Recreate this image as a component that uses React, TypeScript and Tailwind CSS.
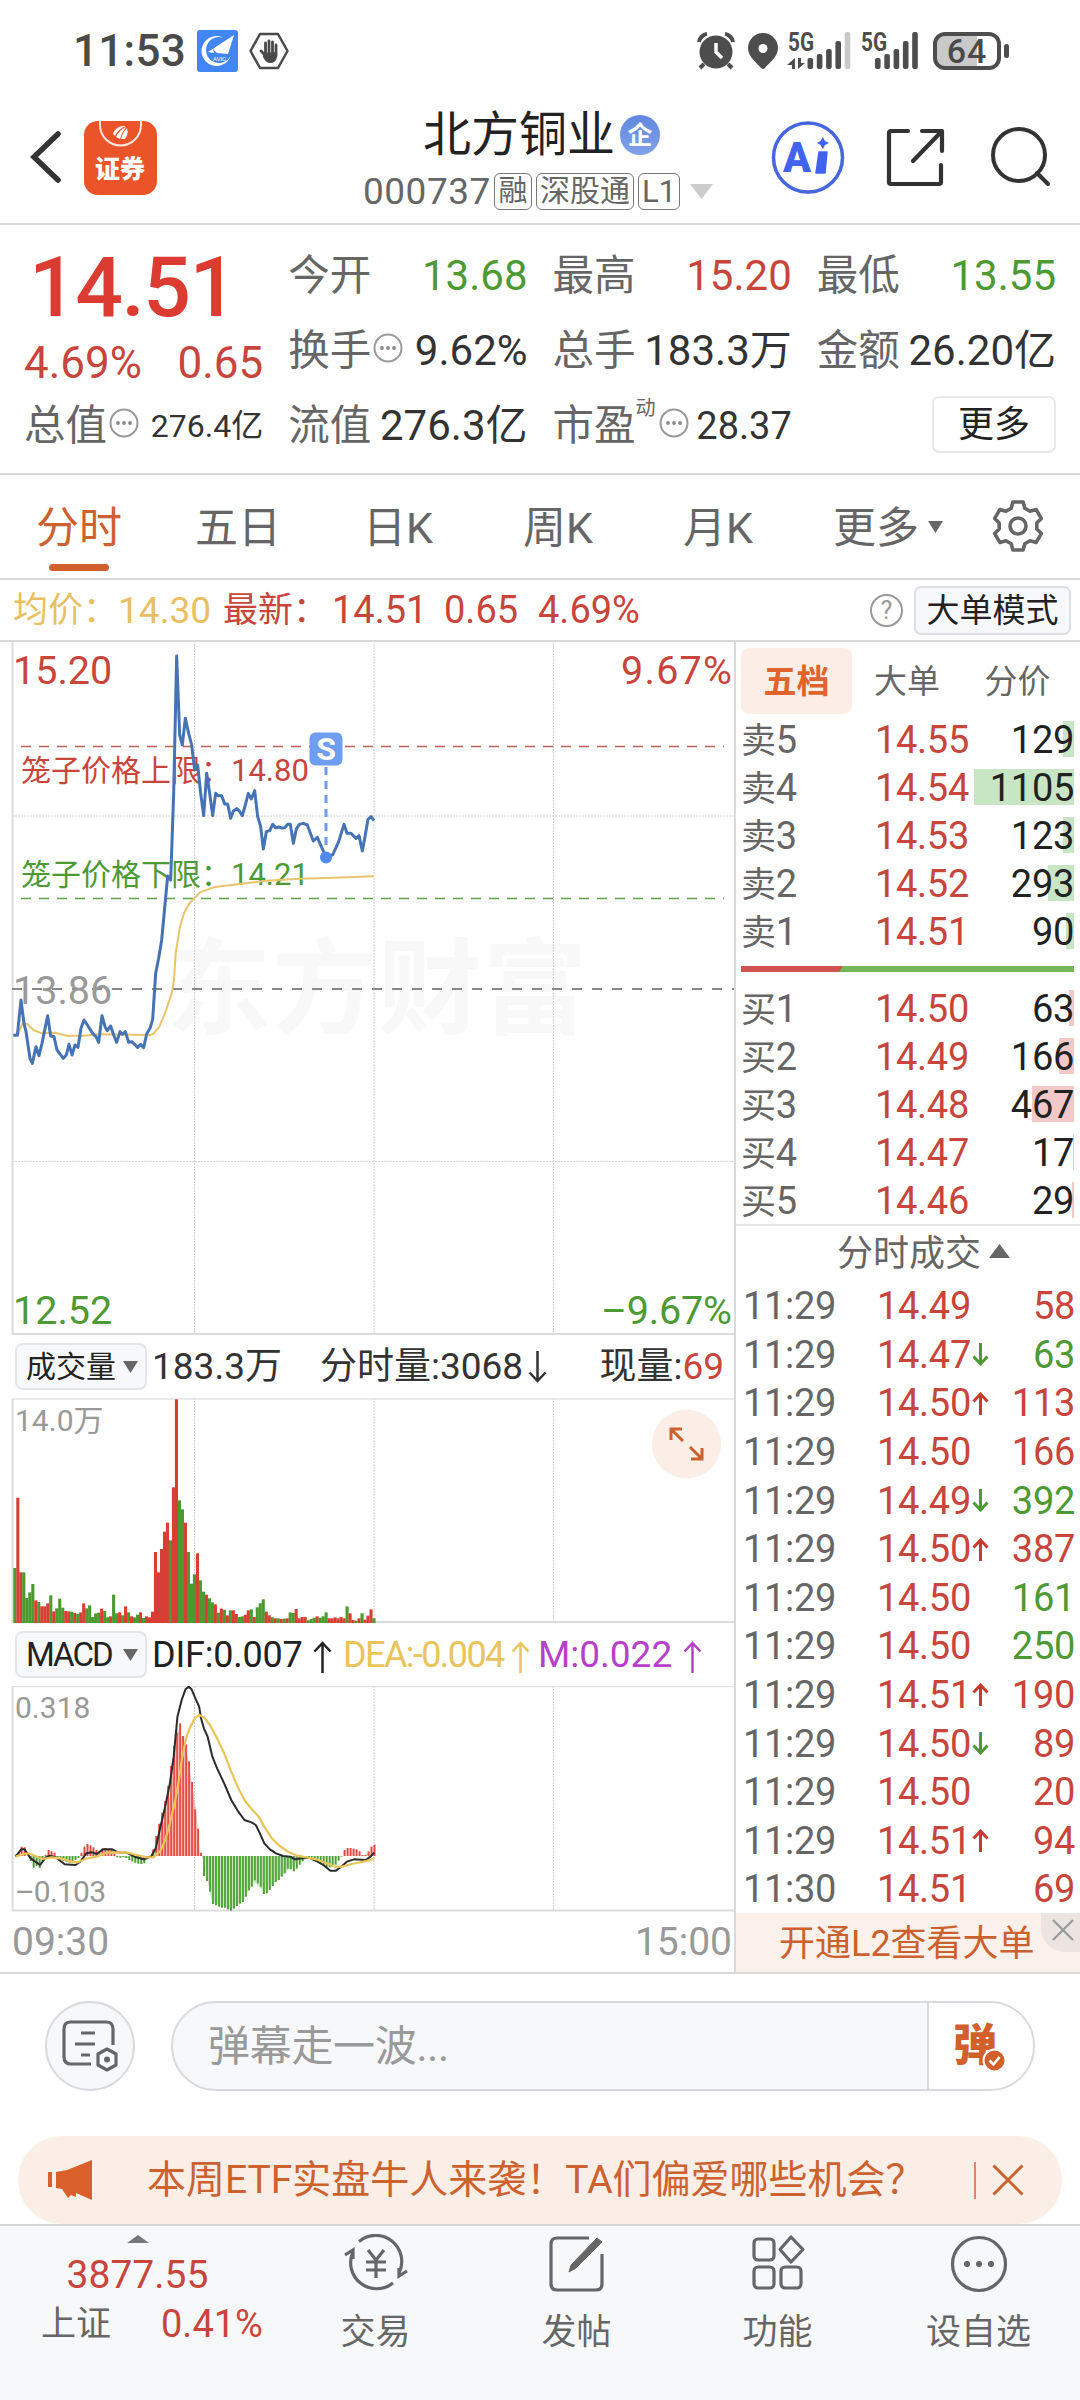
import type { ReactNode } from 'react';
import clsx from 'clsx';

const RED = '#c8453c';
const GREEN = '#4d9a35';

interface Level {
  label: string;
  price: string;
  volume: number;
  width: number;
}

interface Tick {
  time: string;
  price: string;
  volume: number;
  dir?: 'up' | 'down';
  sell?: boolean;
}

const asks: Level[] = [
  { label: '卖5', price: '14.55', volume: 129, width: 11 },
  { label: '卖4', price: '14.54', volume: 1105, width: 100 },
  { label: '卖3', price: '14.53', volume: 123, width: 11 },
  { label: '卖2', price: '14.52', volume: 293, width: 26 },
  { label: '卖1', price: '14.51', volume: 90, width: 8 },
];

const bids: Level[] = [
  { label: '买1', price: '14.50', volume: 63, width: 5 },
  { label: '买2', price: '14.49', volume: 166, width: 15 },
  { label: '买3', price: '14.48', volume: 467, width: 42 },
  { label: '买4', price: '14.47', volume: 17, width: 1 },
  { label: '买5', price: '14.46', volume: 29, width: 2 },
];

const ticks: Tick[] = [
  { time: '11:29', price: '14.49', volume: 58 },
  { time: '11:29', price: '14.47', volume: 63, dir: 'down', sell: true },
  { time: '11:29', price: '14.50', volume: 113, dir: 'up' },
  { time: '11:29', price: '14.50', volume: 166 },
  { time: '11:29', price: '14.49', volume: 392, dir: 'down', sell: true },
  { time: '11:29', price: '14.50', volume: 387, dir: 'up' },
  { time: '11:29', price: '14.50', volume: 161, sell: true },
  { time: '11:29', price: '14.50', volume: 250, sell: true },
  { time: '11:29', price: '14.51', volume: 190, dir: 'up' },
  { time: '11:29', price: '14.50', volume: 89, dir: 'down' },
  { time: '11:29', price: '14.50', volume: 20 },
  { time: '11:29', price: '14.51', volume: 94, dir: 'up' },
  { time: '11:30', price: '14.51', volume: 69 },
];

const pricePoints =
  '40,1216 52,1216 63,1110 72,1180 78,1205 90,1285 97,1300 108,1250 117,1277 126,1240 143,1157 152,1218 162,1220 171,1260 190,1285 199,1275 207,1243 216,1275 225,1245 234,1252 243,1195 252,1170 264,1188 278,1210 288,1220 296,1237 306,1157 315,1190 322,1202 332,1188 341,1215 350,1237 360,1205 367,1213 376,1205 386,1237 395,1235 404,1243 413,1252 422,1243 431,1253 440,1212 450,1195 458,1168 467,1030 476,985 485,930 503,738 512,750 521,490 530,78 539,315 547,345 556,265 566,310 575,345 584,420 593,405 602,490 611,557 620,430 629,490 638,557 647,490 655,497 665,497 674,522 683,522 692,565 700,543 710,536 718,543 727,557 736,525 745,490 754,507 764,482 773,560 782,590 790,657 799,605 809,602 818,583 827,593 836,591 845,594 854,593 863,583 871,583 880,640 889,597 898,583 910,580 922,585 930,607 940,633 952,622 964,650 978,680 998,675 1016,635 1032,583 1041,610 1053,610 1068,625 1077,617 1087,663 1095,620 1104,568 1113,560 1122,572';

const averagePoints =
  '40,1216 55,1212 67,1180 82,1182 100,1200 125,1210 165,1208 200,1217 250,1217 300,1213 450,1215 460,1212 478,1190 495,1150 515,1090 522,1050 527,970 540,890 552,850 568,820 585,803 600,787 640,772 700,764 800,752 900,746 1000,743 1122,739';

// r = rising minute, g = falling minute
const volumeBars =
  'g165 r376 r152 g152 g75 g92 g117 r68 g63 r50 r50 r59 g83 r35 g44 g73 g46 r36 r35 g34 r30 g27 r32 r59 g44 g53 g18 g29 g31 r43 g36 g17 r20 g85 g29 r32 g23 r50 g32 r20 g17 g25 r32 g15 r20 r17 r34 r213 r152 r222 r274 r301 g248 r407 r671 g368 g341 r301 g213 g118 g146 r209 g128 g94 r85 g74 g62 r56 g31 r43 g40 r23 g38 r38 r27 g18 g20 r25 r38 g41 r18 g47 g59 g71 r34 r23 g17 r14 g14 r12 g13 r14 g32 g30 r42 r14 r18 r18 g8 g12 g16 r20 g16 g20 g32 r14 r14 r17 r14 r18 r14 g50 r29 r9 g7 r14 g29 r10 r22 r41 g14'.split(' ');

const macdBars = [
  4, 8, 28, 26, 0, -15, -35, -30, -36, -15, 3, 18, 14, 10, -4, -12, -16, -18, -20, -16, -12, -6, 10, 28, 36, 32, 26, 18, 8, 22,
  24, 20, 18, 8, -4, -5, -4, -6, -12, -16, -20, -23, -24, -22, -10, -2, 20, 60, 97, 130, 165, 210, 270, 330, 370, 398, 360,
  335, 284, 222, 140, 82, 10, -60, -75, -107, -144, -148, -152, -155, -155, -160, -164, -158, -150, -143, -138, -122, -103,
  -92, -73, -82, -92, -114, -112, -102, -90, -78, -72, -62, -52, -38, -40, -46, -38, -26, -16, -8, -6, -8, -12, -18, -24, -28,
  -33, -34, -33, -26, -14, -2, 18, 24, 24, 22, 20, 14, 3, 4, 14, 28, 34,
];

const difPoints =
  '33,740 45,718 52,718 65,745 85,765 97,742 105,737 118,742 137,763 160,765 170,755 183,730 195,727 205,732 218,718 238,718 250,727 268,728 285,740 305,748 320,740 330,715 340,650 350,590 360,520 368,440 376,320 385,270 393,238 400,230 406,238 414,265 422,290 426,325 432,355 440,380 450,440 460,475 475,520 490,570 505,605 518,630 533,637 542,645 550,668 560,700 572,718 585,730 600,738 615,740 625,748 640,745 655,743 670,753 685,765 700,782 712,782 725,768 735,755 750,748 775,750 785,740 793,728';

const deaPoints =
  '33,740 50,732 60,730 75,738 90,747 110,742 130,746 150,755 165,757 185,745 205,740 225,728 250,727 270,728 290,735 310,742 325,742 340,722 350,690 360,640 370,580 378,520 385,450 395,380 405,345 414,323 422,315 432,322 445,345 460,385 475,430 490,485 505,535 518,570 530,592 548,620 560,650 575,683 590,705 610,725 630,737 650,742 670,748 690,758 710,770 725,770 745,762 770,755 785,750 793,745';

const gearPath =
  Array.from({ length: 6 }, (_, i) => {
    const point = (deg: number, r: number) => {
      const a = ((i * 60 - 90 + deg) * Math.PI) / 180;
      return `${(27 + r * Math.cos(a)).toFixed(1)} ${(27 + r * Math.sin(a)).toFixed(1)}`;
    };
    return `${i ? 'L' : 'M'}${point(-21, 19)}L${point(-12, 24.5)}L${point(12, 24.5)}L${point(21, 19)}`;
  }).join('') + 'Z';

function Signal({ x, weak }: { x: number; weak?: boolean }) {
  return (
    <g fill="#4d4d4d">
      {[58, 54, 49, 41, 32].map((top, i) => (
        <rect key={top} x={x + i * 9.3} y={top - 32} width="5.6" height={69 - top} rx="2" fill={weak && i === 4 ? '#c9c9c9' : '#4d4d4d'} />
      ))}
    </g>
  );
}

function StatusBar() {
  return (
    <div className="flex h-[102px] items-center pl-[73px] text-[#4a4a4a]">
      <span className="w-[124px] text-[44px] leading-none font-medium tracking-[0.3px]">11:53</span>
      <svg width="41" height="42" viewBox="0 0 41 42">
        <rect width="41" height="42" rx="3" fill="#4285f4" />
        <path d="M27 8A15 15 0 1 0 34 25A13 13 0 1 1 27 8Z" fill="#fff" />
        <path d="M37 5L11 22L17 23L16 19L20 23L31 24L37 5Z" fill="#fff" />
        <text x="16" y="31" fontSize="6" fill="#fff">AVIC</text>
      </svg>
      <svg className="ml-[11px]" width="40" height="38" viewBox="0 0 40 38" fill="none">
        <path d="M11 2H29L38.500 19L29 36H11L1.500 19Z" stroke="#4a4a4a" strokeWidth="2.500" strokeLinejoin="round" />
        <path d="M12 19L17 24M16.500 11V22M20 9V22M23.500 10V22M27 13V24" stroke="#4a4a4a" strokeWidth="2.800" strokeLinecap="round" />
        <path d="M14 21L28 20V25Q27 31 21 31Q17 31 14 25Z" fill="#4a4a4a" />
      </svg>
      <svg className="ml-[408px]" width="38" height="38" viewBox="0 0 38 38">
        <circle cx="19" cy="20" r="16.500" fill="#4d4d4d" />
        <path d="M2 10A9 9 0 0 1 10 2M28 2A9 9 0 0 1 36 10M7 32L3 36M31 32L35 36" stroke="#4d4d4d" strokeWidth="4" />
        <path d="M19 11V20L25 26" stroke="#fff" strokeWidth="3.500" fill="none" />
      </svg>
      <svg className="ml-[13px]" width="30" height="37" viewBox="0 0 30 37">
        <path d="M15 0A15 15 0 0 0 0 15C0 24 9 30 13 35Q15 37 17 35C21 30 30 24 30 15A15 15 0 0 0 15 0Z" fill="#4d4d4d" />
        <circle cx="15" cy="15.500" r="4.500" fill="#fff" />
      </svg>
      <svg className="ml-[9px]" width="134" height="58" viewBox="0 -10 134 58">
        <g fontSize="25" fontWeight="700" fill="#4d4d4d">
          <text x="1" y="18.500" textLength="26" lengthAdjust="spacingAndGlyphs">5G</text>
          <text x="74" y="18.500" textLength="26" lengthAdjust="spacingAndGlyphs">5G</text>
        </g>
        <path d="M8 37V26L0 33H5V37ZM11 26V37L18 31H14V26Z" fill="#4d4d4d" />
        <Signal x={20.500} weak />
        <Signal x={88} />
      </svg>
      <div className="relative ml-[12px] flex h-[38px] w-[68px] items-center justify-center rounded-[12px] border-4 border-[#4d4d4d] bg-[linear-gradient(to_right,#c9c9c9_66%,#ffffff_66%)]">
        <span className="text-[34px] leading-none font-medium tracking-[1px]">64</span>
      </div>
      <div className="ml-[3px] h-[14px] w-[5px] rounded-full bg-[#4d4d4d]" />
    </div>
  );
}

function Header() {
  return (
    <header className="flex h-[123px] border-b-2 border-[#d9d9d9]">
      <svg className="mt-[27px] ml-[28px]" width="36" height="56" viewBox="0 0 36 56" fill="none">
        <path d="M30 5L6 28L30 51" stroke="#333" strokeWidth="5.500" strokeLinecap="round" />
      </svg>
      <svg className="mt-[19px] ml-[20px]" width="73" height="74" viewBox="0 0 73 74">
        <rect width="73" height="74" rx="14" fill="#ea5428" />
        <path d="M16 0V4A20 20 0 0 0 57 4V0" stroke="#ffe9e0" strokeWidth="2" fill="none" />
        <path d="M29 13Q32 4 42 5Q34 8 31 15ZM32 16Q35 9 42 6Q38 11 36 18ZM37 18Q39 11 43 7Q45 13 41 18Z" fill="#fff" />
        <text x="11" y="57" fontSize="25" fontWeight="900" fill="#fff">证券</text>
      </svg>
      <div className="ml-[206px] w-[378px]">
        <div className="mt-[7px] ml-[60px] flex h-[52px] items-center gap-[5px]">
          <h1 className="text-[48px] leading-none text-[#222]">北方铜业</h1>
          <span className="flex size-[40px] items-center justify-center rounded-full bg-linear-to-b from-[#5f86de] to-[#82a1ea] text-[25px] leading-none font-bold text-white">企</span>
        </div>
        <div className="mt-[10px] flex h-[40px] items-center text-[#666]">
          <span className="w-[131px] text-[37px] leading-none tracking-[0.5px]">000737</span>
          <span className="flex h-[37px] w-[38px] items-center justify-center rounded-[6px] border border-[#777] text-[29px] leading-none">融</span>
          <span className="ml-[4px] flex h-[37px] w-[98px] items-center justify-center rounded-[6px] border border-[#777] text-[30px] leading-none">深股通</span>
          <span className="ml-[4px] flex h-[37px] w-[42px] items-center justify-center rounded-[6px] border border-[#777] text-[31px] leading-none">L1</span>
          <svg className="ml-[10px]" width="23" height="15" viewBox="0 0 23 15">
            <path d="M0 0H23L11.500 15Z" fill="#ccc" />
          </svg>
        </div>
      </div>
      <svg className="mt-[18px] ml-[30px]" width="74" height="75" viewBox="0 0 74 75">
        <circle cx="37" cy="37.500" r="34.500" fill="#fff" stroke="#4666dd" strokeWidth="3.500" />
        <text x="12" y="52" fontSize="42" fontWeight="900" fill="#4163f0" textLength="28" lengthAdjust="spacingAndGlyphs">A</text>
        <path d="M48 32H56L54 53H45Z" fill="#4163f0" stroke="#4163f0" strokeWidth="1.500" strokeLinejoin="round" />
        <path d="M52 17L54 21L58 23L54 25L52 29L49.500 25L46 23L49.500 21Z" fill="#4163f0" />
      </svg>
      <svg className="mt-[25px] ml-[40px]" width="61" height="62" viewBox="0 0 61 62" fill="none" stroke="#333" strokeWidth="4.200" strokeLinecap="round" strokeLinejoin="round">
        <path d="M23 4H6Q4 4 4 6V55Q4 57 6 57H54Q56 57 56 55V38M37 4H57V24M56 5L28 34" />
      </svg>
      <svg className="mt-[23px] ml-[42px]" width="66" height="66" viewBox="0 0 66 66" fill="none" stroke="#333" strokeWidth="4" strokeLinecap="round">
        <circle cx="31" cy="30" r="26" />
        <path d="M49 48L60 59" />
      </svg>
    </header>
  );
}

function Dots({ className }: { className?: string }) {
  return (
    <svg className={className} width="30" height="30" viewBox="0 0 30 30">
      <circle cx="15" cy="15" r="13.500" fill="none" stroke="#999" strokeWidth="2" />
      <g fill="#888">
        <circle cx="9" cy="15" r="1.900" />
        <circle cx="15" cy="15" r="1.900" />
        <circle cx="21" cy="15" r="1.900" />
      </g>
    </svg>
  );
}

function Stat({ label, value, className = 'text-[#333]', children }: { label: string; value: string; className?: string; children?: ReactNode }) {
  return (
    <div className="flex h-[75px] items-center">
      <span className="-ml-[2px] text-[41.500px] leading-none whitespace-nowrap text-[#666]">{label}</span>
      {children}
      <span className={clsx('ml-auto text-[42px] leading-none whitespace-nowrap', className)}>{value}</span>
    </div>
  );
}

function Quote() {
  return (
    <section className="grid h-[250px] grid-cols-4 gap-[27px] border-b-2 border-[#d9d9d9] pt-[13px] pr-[24px] pl-[26px]">
      <div>
        <div className="flex h-[99px] items-center pl-[3px] text-[84px] leading-none font-medium tracking-[-1.500px] text-[#dc3b32]">14.51</div>
        <div className="-ml-[2px] flex h-[52px] items-center justify-between text-[44px] leading-none text-[#c8453c]">
          <span>4.69%</span>
          <span>0.65</span>
        </div>
        <div className="flex h-[74px] items-center">
          <span className="-ml-[2px] text-[41.500px] leading-none text-[#666]">总值</span>
          <Dots className="mb-[6px] ml-[2px]" />
          <span className="ml-auto text-[32px] leading-none whitespace-nowrap text-[#333]">276.4亿</span>
        </div>
      </div>
      <div>
        <Stat label="今开" value="13.68" className="text-[#4d9a35]" />
        <Stat label="换手" value="9.62%">
          <Dots className="mb-[6px] ml-[2px]" />
        </Stat>
        <Stat label="流值" value="276.3亿" />
      </div>
      <div>
        <Stat label="最高" value="15.20" className="text-[#c8453c]" />
        <Stat label="总手" value="183.3万" />
        <div className="flex h-[75px] items-center">
          <span className="-ml-[2px] text-[41.500px] leading-none text-[#666]">市盈</span>
          <span className="mb-[36px] text-[20px] leading-none text-[#666]">动</span>
          <Dots className="mb-[6px] ml-[3px]" />
          <span className="ml-auto text-[38px] leading-none text-[#333]">28.37</span>
        </div>
      </div>
      <div>
        <Stat label="最低" value="13.55" className="text-[#4d9a35]" />
        <Stat label="金额" value="26.20亿" />
        <button className="mt-[8px] ml-auto flex h-[57px] w-[124px] items-center justify-center rounded-[7px] border-2 border-[#e8e8e8] text-[36px] leading-none text-[#222]">更多</button>
      </div>
    </section>
  );
}

function PeriodTabs() {
  return (
    <nav className="flex h-[105px] border-b-2 border-[#d9d9d9] text-[43px] leading-none text-[#666]">
      <div className="relative flex w-[158px] items-center justify-center pt-[3px] text-[#cb622f]">
        分时
        <span className="absolute bottom-[7px] left-[49px] h-[7px] w-[60px] rounded-full bg-[#d1602c]" />
      </div>
      {['五日', '日K', '周K', '月K'].map((tab) => (
        <div key={tab} className="flex w-[160px] items-center justify-center pt-[3px]">{tab}</div>
      ))}
      <div className="flex w-[178px] items-center justify-center gap-[9px] pt-[3px] pl-[2px]">
        更多
        <svg className="mb-[3px]" width="15" height="12" viewBox="0 0 15 12"><path d="M0 0H15L7.500 12Z" fill="#666" /></svg>
      </div>
      <svg className="mt-[24px] ml-[15px]" width="54" height="54" viewBox="0 0 54 54" fill="none" stroke="#666" strokeWidth="3.600" strokeLinejoin="round">
        <path d={gearPath} />
        <circle cx="27" cy="27" r="8" />
      </svg>
    </nav>
  );
}

function InfoBar() {
  return (
    <div className="flex h-[62px] items-center border-b-2 border-[#d9d9d9] text-[38px] leading-none text-[#c8453c]">
      <div className="flex w-[211px] items-center pl-[13px] text-[37px] leading-none text-[#e8bf62]">
        <span className="w-[109px] text-[35px] leading-none whitespace-nowrap">均价：</span>
        <span>14.30</span>
      </div>
      <div className="flex items-center pl-[12px]">
        <span className="w-[109px] text-[35px] leading-none whitespace-nowrap">最新：</span>
        <span className="w-[112px]">14.51</span>
        <span className="w-[94px]">0.65</span>
        <span>4.69%</span>
      </div>
      <div className="mr-[9px] ml-auto flex items-center gap-[11px]">
        <span className="flex size-[33px] items-center justify-center rounded-full border-2 border-[#999] text-[25px] leading-none text-[#999]">?</span>
        <button className="flex h-[49px] w-[157px] items-center justify-center rounded-[7px] border-2 border-[#dcdee1] bg-[#f7f8fa] text-[33px] leading-none text-[#222]">大单模式</button>
      </div>
    </div>
  );
}

function GridLines({ height }: { height: number }) {
  return (
    <g stroke="#cfcfcf" strokeWidth="1" strokeDasharray="2 1">
      <path d={`M194.500 0V${height}M374 0V${height}M553.500 0V${height}`} />
    </g>
  );
}

function PriceChart() {
  return (
    <svg className="block" width="734" height="693" viewBox="0 1 734 693" fill="none">
      <text x="167" y="385" fontSize="104" fontWeight="700" fill="#f8f8f8" textLength="420">东方财富</text>
      <GridLines height={693} />
      <path d="M12 175H734M12 520.500H734" stroke="#d4d4d4" strokeDasharray="2 1" />
      <path d="M12.500 0V693H734" stroke="#dcdcdc" strokeWidth="2" />
      <path d="M12 348H734" stroke="#888" strokeWidth="2" strokeDasharray="10 10" />
      <path d="M21 105.500H724" stroke="#c0605c" strokeWidth="1.500" strokeDasharray="10 8" />
      <path d="M21 257.500H724" stroke="#5fa34b" strokeWidth="1.500" strokeDasharray="10 8" />
      <g fontSize="39.500">
        <text x="13" y="42.500" fill={RED}>15.20</text>
        <text x="732" y="42.500" fill={RED} textAnchor="end" textLength="111">9.67%</text>
        <text x="13" y="362.500" fill="#999">13.86</text>
        <text x="13" y="682.500" fill={GREEN}>12.52</text>
        <text x="732" y="682.500" fill={GREEN} textAnchor="end" textLength="131">–9.67%</text>
      </g>
      <g fontSize="30">
        <text x="21" y="140" fill={RED}>笼子价格上限：</text>
        <text x="231" y="140" fontSize="31" fill={RED}>14.80</text>
        <text x="21" y="244" fill={GREEN}>笼子价格下限：</text>
        <text x="231" y="244" fontSize="31" fill={GREEN}>14.21</text>
      </g>
      <g transform="translate(0 -11) scale(0.33333)" strokeLinejoin="round">
        <polyline points={averagePoints} stroke="#e9c46c" strokeWidth="6" />
        <polyline points={pricePoints} stroke="#4573b3" strokeWidth="9" />
      </g>
      <path d="M326 126V206" stroke="#6f9bea" strokeWidth="3" strokeDasharray="8 6" />
      <circle cx="326" cy="216.500" r="6" fill="#5088ee" />
      <rect x="309.500" y="91.500" width="33" height="33" rx="6" fill="#6f9df0" />
      <text x="326" y="119" fontSize="32" fontWeight="700" fill="#fff" textAnchor="middle">S</text>
    </svg>
  );
}

function VolumeChart() {
  return (
    <svg className="block" width="734" height="225" viewBox="0 0 734 225" fill="none">
      <GridLines height={224} />
      <path d="M12 1H734" stroke="#e2e2e2" strokeWidth="1.500" />
      <path d="M12.500 1V224H734" stroke="#dcdcdc" strokeWidth="2" />
      <text x="15" y="33" fontSize="30" fill="#999">14.0万</text>
      {volumeBars.map((bar, i) => {
        const h = Number(bar.slice(1)) / 3;
        return <rect key={i} x={13.300 + i * 2.993} y={225 - h} width="3.100" height={h} fill={bar[0] === 'r' ? '#d73f35' : '#4b9a30'} />;
      })}
      <circle cx="686.500" cy="46" r="34.500" fill="#fbeee7" />
      <path d="M671 42V31H682M672 32L683 43M702 50V61H691M701 60L690 49" stroke="#cc602f" strokeWidth="3" />
    </svg>
  );
}

function MacdChart() {
  return (
    <svg className="block" width="734" height="226" viewBox="0 0 734 226" fill="none">
      <GridLines height={224} />
      <path d="M12 0.500H734" stroke="#e2e2e2" strokeWidth="1.500" />
      <path d="M12.500 0V224.500H734" stroke="#dcdcdc" strokeWidth="2" />
      <text x="15" y="32" fontSize="30" fill="#999">0.318</text>
      <text x="15" y="216" fontSize="30" fill="#999" textLength="91">–0.103</text>
      {macdBars.map((v, i) => (
        <rect key={i} x={14.700 + i * 2.990} y={v > 0 ? 170 - v / 3 : 170} width="2" height={Math.abs(v) / 3} fill={v > 0 ? '#e04a42' : '#4b9f32'} />
      ))}
      <path d="M155 170L170 110L177 42L186 60L197 130L200 170Z" fill="#f0605a" opacity="0.350" />
      <path d="M202 170L212 216L232 223L243 214L254 196L264 206L303 170Z" fill="#6cb654" opacity="0.350" />
      <g transform="translate(0 -76) scale(0.47192 0.33333)" strokeLinejoin="round">
        <polyline points={difPoints} stroke="#2b2b2b" strokeWidth="2" vectorEffect="non-scaling-stroke" />
        <polyline points={deaPoints} stroke="#e9c558" strokeWidth="2.200" vectorEffect="non-scaling-stroke" />
      </g>
    </svg>
  );
}

function Arrow({ down, className, width = 19, height = 32, stroke = 2.5 }: { down?: boolean; className?: string; width?: number; height?: number; stroke?: number }) {
  return (
    <svg className={clsx('shrink-0', className, down && 'rotate-180')} width={width} height={height} viewBox={`0 0 ${width} ${height}`} fill="none" stroke="currentColor" strokeWidth={stroke}>
      <path d={`M${width / 2} ${height}V2M1.500 ${width / 2 + 1}L${width / 2} 2L${width - 1.500} ${width / 2 + 1}`} />
    </svg>
  );
}

function Picker({ label, className }: { label: string; className?: string }) {
  return (
    <button className={clsx('mr-[5px] ml-[15px] flex h-[47px] w-[132px] shrink-0 items-center justify-between rounded-[8px] border-2 border-[#e3e5e8] bg-[#f7f8fa] pr-[7px] pl-[9px] leading-none text-[#222]', className)}>
      {label}
      <svg width="15" height="12" viewBox="0 0 15 12"><path d="M0 0H15L7.500 12Z" fill="#666" /></svg>
    </button>
  );
}

function Charts() {
  return (
    <div className="w-[734px]">
      <PriceChart />
      <div className="flex h-[63px] items-center text-[37px] leading-none whitespace-nowrap text-[#333]">
        <Picker label="成交量" className="text-[30px]" />
        <span className="w-[168px]">183.3万</span>
        <span>分时量:3068</span>
        <Arrow down className="ml-[5px]" />
        <span className="mr-[10px] ml-auto">现量:<span className="text-[#c8453c]">69</span></span>
      </div>
      <VolumeChart />
      <div className="flex h-[63px] items-center text-[36px] leading-none whitespace-nowrap text-[#222]">
        <Picker label="MACD" className="text-[33px] tracking-[-2px]" />
        <span className="w-[161px] tracking-[-0.200px]">DIF:0.007</span>
        <Arrow className="mt-[4px]" />
        <span className="ml-[11px] flex w-[168px] text-[36px] leading-none tracking-[-1.600px] text-[#e9c45c]">DEA:-0.004</span>
        <Arrow className="mt-[4px] text-[#e9c45c]" />
        <span className="ml-[8px] w-[145px] text-[37px] leading-none text-[#b83fc9]">M:0.022</span>
        <Arrow className="mt-[4px] text-[#b83fc9]" />
      </div>
      <MacdChart />
      <div className="flex h-[60px] items-center justify-between pr-[2px] pl-[12px] text-[39px] leading-none text-[#999]">
        <span>09:30</span>
        <span>15:00</span>
      </div>
    </div>
  );
}

function LevelRow({ level, ask }: { level: Level; ask?: boolean }) {
  return (
    <div className="relative flex h-[48px] items-center pr-[6px] pl-[5px] text-[38px] leading-none tracking-[-0.300px]">
      <span className={clsx('absolute top-[5px] right-[6px] h-[36px]', ask ? 'bg-[#c8e6c3]' : 'bg-[#f2c9c8]')} style={{ width: level.width }} />
      <span className="w-[134px] text-[#666]"><span className="text-[35px] leading-none">{level.label[0]}</span>{level.label[1]}</span>
      <span className="text-[#c8453c]">{level.price}</span>
      <span className="relative ml-auto text-[#222]">{level.volume}</span>
    </div>
  );
}

function OrderBook() {
  return (
    <aside className="flex w-[346px] flex-col border-l-2 border-[#d9d9d9]">
      <div className="flex h-[74px] pt-[6px] pl-[5px] text-[33px] leading-none text-[#666]">
        <span className="flex h-[66px] w-[111px] items-center justify-center rounded-[8px] bg-[#fceee7] font-bold text-[#e0622d]">五档</span>
        <span className="flex h-[66px] w-[110px] items-center justify-center">大单</span>
        <span className="flex h-[66px] w-[111px] items-center justify-center">分价</span>
      </div>
      {asks.map((level) => <LevelRow key={level.label} level={level} ask />)}
      <svg className="mt-[10px] ml-[5px]" width="333" height="6" viewBox="0 0 333 6">
        <rect width="333" height="6" fill="#76b65a" />
        <path d="M0 0H102L98 6H0Z" fill="#d0534e" />
      </svg>
      <div className="mt-[13px] h-[241px] border-b-2 border-[#e4e4e4]">
        {bids.map((level) => <LevelRow key={level.label} level={level} />)}
      </div>
      <div className="flex h-[56px] items-center gap-[8px] pl-[101px] text-[36px] leading-none text-[#666]">
        分时成交
        <svg className="mb-[5px]" width="21" height="14" viewBox="0 0 21 14"><path d="M0 14H21L10.500 0Z" fill="#666" /></svg>
      </div>
      {ticks.map((tick, i) => (
        <div key={i} className="flex h-[48.650px] items-center pt-[1px] pr-[5px] pl-[7px] text-[38px] leading-none tracking-[-0.300px]">
          <span className="w-[134px] text-[#666]">{tick.time}</span>
          <span className="w-[95px] text-[#c8453c]">{tick.price}</span>
          {tick.dir && (
            <Arrow down={tick.dir === 'down'} width={17} height={23} stroke={3} className={tick.dir === 'down' ? 'text-[#4d9a35]' : 'text-[#c93a2e]'} />
          )}
          <span className={clsx('ml-auto', tick.sell ? 'text-[#4d9a35]' : 'text-[#c8453c]')}>{tick.volume}</span>
        </div>
      ))}
      <div className="relative mt-auto flex h-[59px] items-center bg-[#fcf1ea] pt-[2px] pl-[43px] text-[36px] leading-none whitespace-nowrap text-[#ca622f]">
        开通L2查看大单
        <span className="absolute top-0 right-0 flex h-[39px] w-[39px] items-center justify-center rounded-bl-[24px] bg-[#ebe4e0] pl-[5px] pb-[5px]">
          <svg width="22" height="22" viewBox="0 0 22 22"><path d="M1 1L21 21M21 1L1 21" stroke="#999" strokeWidth="2.200" /></svg>
        </span>
      </div>
    </aside>
  );
}

function CommentBar() {
  return (
    <div className="flex h-[162px] items-start pt-[27px] pl-[45px]">
      <span className="flex size-[90px] items-center justify-center rounded-full border-2 border-[#d8dadd] bg-[#f7f8fa]">
        <svg width="58" height="54" viewBox="0 0 58 54" fill="none" stroke="#666" strokeWidth="3.200">
          <path d="M30 45H10Q3 45 3 38V10Q3 3 10 3H45Q52 3 52 10V26M20 14H34M14 25H34M20 36H29" />
          <path d="M46 30L55 35V46L46 51L37 46V35Z" strokeLinejoin="round" />
          <circle cx="46" cy="40.500" r="3" fill="#666" stroke="none" />
        </svg>
      </span>
      <div className="ml-[36px] flex h-[90px] w-[864px] overflow-hidden rounded-full border-2 border-[#d8dadd] bg-[#f7f8fa]">
        <span className="flex w-[754px] items-center pt-[2px] pl-[35px] text-[42px] leading-none tracking-[-0.300px] text-[#999]">弹幕走一波...</span>
        <span className="flex flex-1 items-center border-l-2 border-[#d8dadd] bg-white pl-[24px]">
          <span className="relative text-[44px] leading-none font-black text-[#d1602c]">
            弹
            <svg className="absolute -right-[10px] -bottom-[5px]" width="25" height="25" viewBox="0 0 25 25" fill="none">
              <circle cx="12.500" cy="12.500" r="11" fill="#d1602c" stroke="#fff" strokeWidth="2" />
              <path d="M7.500 12.500L11.500 16.500L17.500 9" stroke="#fff" strokeWidth="2.500" />
            </svg>
          </span>
        </span>
      </div>
    </div>
  );
}

function Notice() {
  return (
    <div className="ml-[18px] flex h-[88px] w-[1044px] items-center rounded-[44px] bg-[#fbeee6] text-[#cb622f]">
      <svg className="ml-[29px]" width="47" height="42" viewBox="0 0 47 42" fill="#d9602a">
        <path d="M1 13H5V28H1ZM9 13L20 11L45 1V41L29 34V38L24 36L21 39L15 30L9 29Z" />
      </svg>
      <span className="ml-[53px] text-[39px] leading-none whitespace-nowrap">本周ETF实盘牛人来袭！TA们偏爱哪些机会？</span>
      <span className="ml-auto h-[37px] w-[2px] bg-[#d98a65]" />
      <svg className="mr-[38px] ml-[16px]" width="32" height="32" viewBox="0 0 32 32">
        <path d="M1.500 1.500L30.500 30.500M30.500 1.500L1.500 30.500" stroke="#cb622f" strokeWidth="3" />
      </svg>
    </div>
  );
}

const navItems = [
  {
    label: '交易',
    icon: (
      <>
        <path d="M17 7.500A26 26 0 0 1 57 39M51 49A26 26 0 0 1 11 18M3 21L11 16V25M65 37L57 42V34" />
        <path d="M26 16L34 26L42 16M34 26V44M24 28H44M24 36H44" />
      </>
    ),
  },
  {
    label: '发帖',
    icon: (
      <>
        <path d="M46 4H14Q8 4 8 10V50Q8 56 14 56H53Q59 56 59 50V20" />
        <path d="M26 38L28 31L54 4L59 8L33 34Z" fill="#666" strokeWidth="1" />
      </>
    ),
  },
  {
    label: '功能',
    icon: (
      <>
        <rect x="10" y="5" width="20" height="21" rx="4" />
        <rect x="10" y="33" width="20" height="21" rx="4" />
        <rect x="37" y="33" width="20" height="21" rx="4" />
        <path d="M47 3L59 15.500L47 28L36 15.500Z" strokeLinejoin="round" />
      </>
    ),
  },
  {
    label: '设自选',
    icon: (
      <>
        <circle cx="34" cy="30" r="26.500" />
        <g fill="#666" stroke="none">
          <circle cx="22" cy="30" r="3" />
          <circle cx="34" cy="30" r="3" />
          <circle cx="46" cy="30" r="3" />
        </g>
      </>
    ),
  },
];

function BottomNav() {
  return (
    <footer className="flex h-[177px] border-t-2 border-[#d5d7da] bg-[#f7f8fa] text-[#666]">
      <div className="flex w-[275px] flex-col items-center pt-[9px]">
        <svg width="22" height="8" viewBox="0 0 22 8"><path d="M0 8H22L11 0Z" fill="#777" /></svg>
        <span className="mt-[13px] text-[39px] leading-none text-[#c8453c]">3877.55</span>
        <div className="mt-[10px] flex w-full items-center pl-[41px] text-[38px] leading-none">
          <span className="w-[120px] text-[35px] leading-none">上证</span>
          <span className="text-[#c8453c]">0.41%</span>
        </div>
      </div>
      {navItems.map((item) => (
        <div key={item.label} className="flex w-[201px] flex-col items-center pt-[8px]">
          <svg width="68" height="60" viewBox="0 0 68 60" fill="none" stroke="#666" strokeWidth="3.200">{item.icon}</svg>
          <span className="mt-[21px] text-[35px] leading-none">{item.label}</span>
        </div>
      ))}
    </footer>
  );
}

export default function App() {
  return (
    <div className="h-[2400px] w-[1080px] overflow-hidden bg-white font-[Roboto,'Noto_Sans_CJK_SC',sans-serif]">
      <StatusBar />
      <Header />
      <Quote />
      <PeriodTabs />
      <InfoBar />
      <main className="flex h-[1332px] border-b-2 border-[#d9d9d9]">
        <Charts />
        <OrderBook />
      </main>
      <CommentBar />
      <Notice />
      <BottomNav />
    </div>
  );
}
